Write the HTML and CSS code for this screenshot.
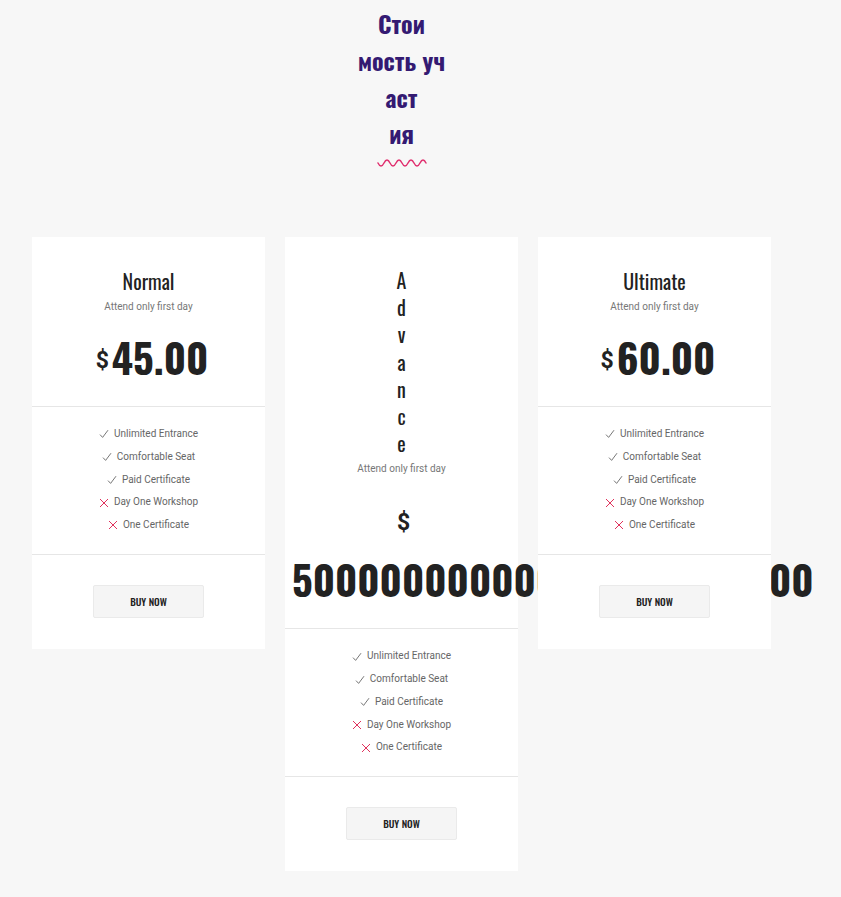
FILE: index.html
```html
<!DOCTYPE html>
<html lang="ru">
<head>
<meta charset="utf-8">
<title>Стоимость участия</title>
<link rel="stylesheet" href="styles.css">
</head>
<body>
<section class="pricing">
  <header class="section-head">
    <h2 class="section-title">Стои<br>мость уч<br>аст<br>ия</h2>
    <svg class="wave" width="50" height="10" viewBox="0 0 50 10" aria-hidden="true">
      <path d="M1 5 q3 6 6 0 t6 0 t6 0 t6 0 t6 0 t6 0 t6 0 t6 0" fill="none" stroke="#e0306f" stroke-width="1.5" stroke-linecap="round"/>
    </svg>
  </header>

  <div class="cards">
    <article class="card">
      <div class="card-head">
        <h3 class="plan">Normal</h3>
        <p class="sub">Attend only first day</p>
        <div class="price"><span class="cur">$</span><wbr><span class="amount">45.00</span></div>
      </div>
      <ul class="features">
        <li><svg class="ico ok" viewBox="0 0 10 10"><path d="M1 5.6 L3.6 8.4 L9 1.2"/></svg>Unlimited Entrance</li>
        <li><svg class="ico ok" viewBox="0 0 10 10"><path d="M1 5.6 L3.6 8.4 L9 1.2"/></svg>Comfortable Seat</li>
        <li><svg class="ico ok" viewBox="0 0 10 10"><path d="M1 5.6 L3.6 8.4 L9 1.2"/></svg>Paid Certificate</li>
        <li><svg class="ico no" viewBox="0 0 10 10"><path d="M1 1 L9 9 M9 1 L1 9"/></svg>Day One Workshop</li>
        <li><svg class="ico no" viewBox="0 0 10 10"><path d="M1 1 L9 9 M9 1 L1 9"/></svg>One Certificate</li>
      </ul>
      <div class="card-foot"><a class="btn" href="#">BUY NOW</a></div>
    </article>

    <article class="card">
      <div class="card-head">
        <h3 class="plan plan-narrow">Advance</h3>
        <p class="sub">Attend only first day</p>
        <div class="price"><span class="cur">$</span><wbr><span class="amount">500000000000000000000.00</span></div>
      </div>
      <ul class="features">
        <li><svg class="ico ok" viewBox="0 0 10 10"><path d="M1 5.6 L3.6 8.4 L9 1.2"/></svg>Unlimited Entrance</li>
        <li><svg class="ico ok" viewBox="0 0 10 10"><path d="M1 5.6 L3.6 8.4 L9 1.2"/></svg>Comfortable Seat</li>
        <li><svg class="ico ok" viewBox="0 0 10 10"><path d="M1 5.6 L3.6 8.4 L9 1.2"/></svg>Paid Certificate</li>
        <li><svg class="ico no" viewBox="0 0 10 10"><path d="M1 1 L9 9 M9 1 L1 9"/></svg>Day One Workshop</li>
        <li><svg class="ico no" viewBox="0 0 10 10"><path d="M1 1 L9 9 M9 1 L1 9"/></svg>One Certificate</li>
      </ul>
      <div class="card-foot"><a class="btn" href="#">BUY NOW</a></div>
    </article>

    <article class="card">
      <div class="card-head">
        <h3 class="plan">Ultimate</h3>
        <p class="sub">Attend only first day</p>
        <div class="price"><span class="cur">$</span><wbr><span class="amount">60.00</span></div>
      </div>
      <ul class="features">
        <li><svg class="ico ok" viewBox="0 0 10 10"><path d="M1 5.6 L3.6 8.4 L9 1.2"/></svg>Unlimited Entrance</li>
        <li><svg class="ico ok" viewBox="0 0 10 10"><path d="M1 5.6 L3.6 8.4 L9 1.2"/></svg>Comfortable Seat</li>
        <li><svg class="ico ok" viewBox="0 0 10 10"><path d="M1 5.6 L3.6 8.4 L9 1.2"/></svg>Paid Certificate</li>
        <li><svg class="ico no" viewBox="0 0 10 10"><path d="M1 1 L9 9 M9 1 L1 9"/></svg>Day One Workshop</li>
        <li><svg class="ico no" viewBox="0 0 10 10"><path d="M1 1 L9 9 M9 1 L1 9"/></svg>One Certificate</li>
      </ul>
      <div class="card-foot"><a class="btn" href="#">BUY NOW</a></div>
    </article>
  </div>
</section>
</body>
</html>
```

FILE: styles.css
```css
html, body {
  margin: 0;
  padding: 0;
  background: #f7f7f7;
}

body {
  font-family: Roboto, "Liberation Sans", sans-serif;
  color: #666;
  overflow: hidden;
}

.pricing {
  width: 739px;
  padding: 5px 0 0 32px;
}

.section-head {
  display: flex;
  flex-direction: column;
  align-items: center;
}

.section-title {
  margin: 0;
  font-family: "Oswald", "Liberation Sans Narrow", "DejaVu Sans Condensed", sans-serif;
  font-weight: 700;
  font-size: 24px;
  line-height: 36.75px;
  color: #341a72;
  text-align: center;
}

.wave {
  display: block;
  margin-top: 6px;
}

.cards {
  display: flex;
  align-items: flex-start;
  gap: 20px;
  margin-top: 69px;
}

.card {
  width: 233px;
  flex: none;
  background: #fff;
}

.card-head {
  padding: 30px 0 19px;
  border-bottom: 1px solid #e6e6e6;
  text-align: center;
}

.plan {
  margin: 0;
  font-family: "Oswald", "Liberation Sans Narrow", "DejaVu Sans Condensed", sans-serif;
  font-weight: 400;
  font-size: 20px;
  line-height: 28px;
  color: #222;
}

.plan-narrow {
  width: min-content;
  margin: 0 auto;
  word-break: break-all;
  line-height: 27.2px;
}

.sub {
  margin: 3px 0 0;
  font-size: 10px;
  line-height: 18px;
  color: #777;
}

.price {
  margin-top: 11px;
  padding-left: 7px;
  font-family: "Oswald", "Liberation Sans Narrow", "DejaVu Sans Condensed", sans-serif;
  font-weight: 700;
  font-size: 40.6px;
  line-height: 60px;
  color: #222;
}

.cur {
  font-family: Roboto, "Liberation Sans", sans-serif;
  font-size: 23px;
  font-weight: 700;
  line-height: 1;
  vertical-align: 7px;
  margin-right: 3px;
}

.amount {
  white-space: nowrap;
}

.features {
  list-style: none;
  margin: 0;
  padding: 16px 0 17px;
  border-bottom: 1px solid #e6e6e6;
  text-align: center;
  font-size: 10px;
  line-height: 22.75px;
  color: #666;
}

.features li {
  display: flex;
  justify-content: center;
  align-items: center;
  gap: 5px;
}

.ico {
  width: 10px;
  height: 10px;
  fill: none;
  stroke-width: 1;
}

.ico.ok {
  stroke: #777;
}

.ico.no {
  stroke: #e0325c;
}

.card-foot {
  padding: 30px 0 31px;
  display: flex;
  justify-content: center;
}

.btn {
  box-sizing: border-box;
  width: 111px;
  height: 33px;
  display: flex;
  align-items: center;
  justify-content: center;
  background: #f5f5f5;
  border: 1px solid #eaeaea;
  border-radius: 2px;
  font-family: "Oswald", "Liberation Sans Narrow", "DejaVu Sans Condensed", sans-serif;
  font-weight: 500;
  font-size: 10px;
  color: #222;
  text-decoration: none;
}
```
